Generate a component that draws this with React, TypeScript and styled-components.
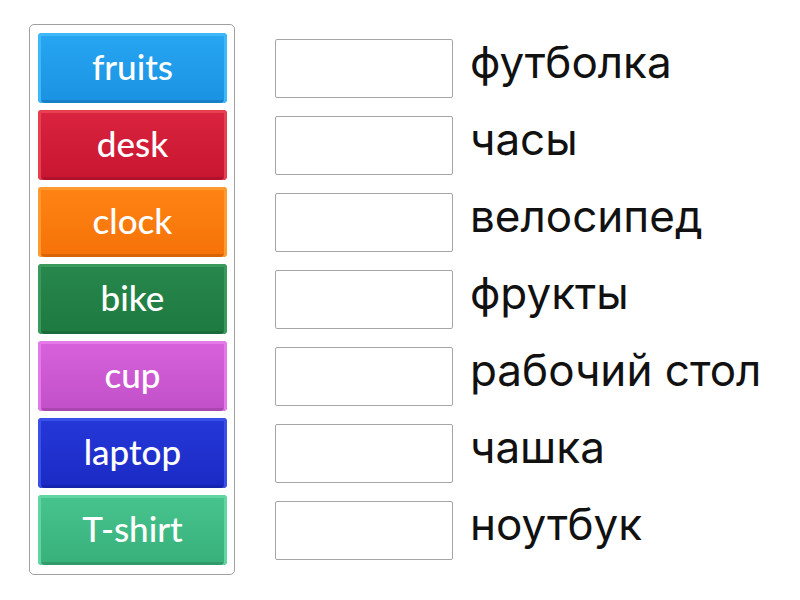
import styled, { createGlobalStyle } from "styled-components";

const GlobalStyle = createGlobalStyle`
  html, body {
    margin: 0;
    padding: 0;
    background: #ffffff;
  }
`;

const Page = styled.div`
  width: 800px;
  height: 600px;
  display: flex;
  align-items: flex-start;
  padding: 24px 0 0 29px;
  box-sizing: border-box;
`;

const TilePanel = styled.div`
  width: 206px;
  height: 551px;
  box-sizing: border-box;
  border: 1px solid #a0a0a0;
  border-radius: 5px;
  padding: 8px 7px 0 8px;
  display: flex;
  flex-direction: column;
  gap: 7px;
`;

const Tile = styled.div<{ $top: string; $bottom: string; $edge: string }>`
  height: 70px;
  border-radius: 4px;
  display: flex;
  align-items: center;
  justify-content: center;
  background: linear-gradient(to bottom, ${(p) => p.$top}, ${(p) => p.$bottom});
  box-shadow: inset 0 3px 0 ${(p) => p.$edge}, inset 3px 0 0 ${(p) => p.$edge},
    inset -3px 0 0 ${(p) => p.$edge}, inset 0 -3px 0 rgba(0, 0, 0, 0.12);
  color: #ffffff;
  font-family: Lato, "Open Sans", sans-serif;
  font-weight: 500;
  font-size: 35px;
  padding-bottom: 5px;
  box-sizing: border-box;
`;

const Rows = styled.div`
  display: flex;
  flex-direction: column;
  gap: 7px;
  margin-left: 40px;
  padding-top: 9px;
`;

const Row = styled.div`
  height: 70px;
  display: flex;
  align-items: center;
  gap: 17px;
`;

const DropBox = styled.div`
  width: 178px;
  height: 59px;
  box-sizing: border-box;
  border: 1px solid #a6a6a6;
  border-radius: 2px;
  background: #ffffff;
`;

const Word = styled.span`
  font-family: Inter, Roboto, sans-serif;
  font-size: 44px;
  color: #111111;
  line-height: 1;
  padding-bottom: 12px;
  white-space: nowrap;
`;

const TILES = [
  { label: "fruits", top: "#27a6f2", bottom: "#1a92e2", edge: "#3eb8f8" },
  { label: "desk", top: "#da2440", bottom: "#c81530", edge: "#e84050" },
  { label: "clock", top: "#ff8414", bottom: "#f57208", edge: "#ff9a30" },
  { label: "bike", top: "#27874c", bottom: "#1e7a40", edge: "#3a9a5c" },
  { label: "cup", top: "#d862dc", bottom: "#c150c8", edge: "#e47ae8" },
  { label: "laptop", top: "#2538d8", bottom: "#1a2ac4", edge: "#3a50e8" },
  { label: "T-shirt", top: "#47c48e", bottom: "#38b07a", edge: "#62d6a2" },
];

const WORDS = [
  "футболка",
  "часы",
  "велосипед",
  "фрукты",
  "рабочий стол",
  "чашка",
  "ноутбук",
];

function App() {
  return (
    <Page>
      <GlobalStyle />
      <TilePanel>
        {TILES.map((t) => (
          <Tile key={t.label} $top={t.top} $bottom={t.bottom} $edge={t.edge}>
            {t.label}
          </Tile>
        ))}
      </TilePanel>
      <Rows>
        {WORDS.map((w) => (
          <Row key={w}>
            <DropBox />
            <Word>{w}</Word>
          </Row>
        ))}
      </Rows>
    </Page>
  );
}

export default App;
